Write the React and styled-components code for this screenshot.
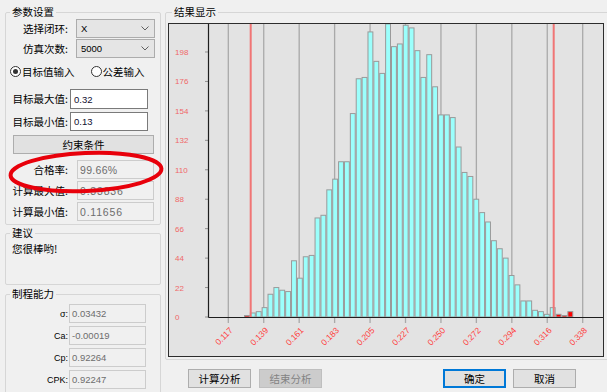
import React from 'react';
import styled, { createGlobalStyle } from 'styled-components';

const GlobalStyle = createGlobalStyle`
  html, body {
    margin: 0;
    padding: 0;
    background: #f0f0f0;
  }
  body {
    font-family: "Noto Sans CJK SC", "Liberation Sans", sans-serif;
  }
`;

const Window = styled.div`
  position: relative;
  width: 607px;
  height: 392px;
  overflow: hidden;
  background: #f0f0f0;
  display: flex;
  font-size: 10.5px;
  color: #000;
`;

const LeftColumn = styled.div`
  width: 156px;
  margin-left: 5px;
  padding-top: 5px;
  display: flex;
  flex-direction: column;
`;

const RightColumn = styled.div`
  width: 442px;
  margin-left: 4px;
  padding-top: 5px;
  display: flex;
  flex-direction: column;
`;

const Group = styled.fieldset`
  margin: ${p => p.$mt || 0}px 0 0 0;
  padding: 0 ${p => p.$pr || 0}px 0 ${p => p.$pl || 0}px;
  border: 1px solid #d6d6d6;
  border-radius: 2px;
  min-width: 0;
  height: ${p => p.$h}px;
  width: ${p => p.$w ? `${p.$w}px` : 'auto'};
  box-sizing: border-box;
  display: flex;
  flex-direction: column;
  flex-shrink: 0;
`;

const Legend = styled.legend`
  margin-left: 4px;
  padding: 0 2px;
  font-size: 10.5px;
  line-height: 14px;
  height: 14px;
`;

const FieldRow = styled.div`
  display: grid;
  grid-template-columns: 62px ${p => p.$w}px;
  column-gap: ${p => p.$gap}px;
  align-items: center;
  height: ${p => p.$h || 19}px;
  margin-top: ${p => p.$mt || 0}px;
`;

const Label = styled.span`
  text-align: right;
  white-space: nowrap;
  font-size: ${p => p.$small ? '9px' : '10.5px'};
  font-family: ${p => p.$small ? '"Liberation Sans", sans-serif' : 'inherit'};
  line-height: 14px;
`;

const ComboBox = styled.div`
  height: 100%;
  box-sizing: border-box;
  border: 1px solid #acacac;
  background: #e5e5e5;
  display: flex;
  align-items: center;
  justify-content: space-between;
  padding: 0 5px 0 4px;
  font-family: "Liberation Sans", sans-serif;
  font-size: 9.5px;
`;

const TextBox = styled.div`
  height: 100%;
  box-sizing: border-box;
  border: 1px solid ${p => p.$readOnly ? '#cccccc' : '#7a7a7a'};
  background: ${p => p.$readOnly ? '#f0f0f0' : '#fff'};
  color: ${p => p.$readOnly ? '#6d6d6d' : '#101030'};
  display: flex;
  align-items: center;
  padding-left: ${p => p.$readOnly ? 2 : 3}px;
  font-family: "Liberation Sans", sans-serif;
  font-size: ${p => p.$size || 9.5}px;
  letter-spacing: ${p => p.$spacing || 0}px;
`;

const RadioRow = styled.div`
  display: flex;
  align-items: center;
  height: 13px;
  margin-top: 7px;
  padding-left: 4px;
  gap: 16px;
`;

const RadioOption = styled.label`
  display: flex;
  align-items: center;
  gap: 1px;
  line-height: 13px;
  white-space: nowrap;
`;

const RadioDot = styled.span`
  width: 11px;
  height: 11px;
  box-sizing: border-box;
  border-radius: 50%;
  border: 1px solid #333;
  background: #fff;
  display: inline-flex;
  align-items: center;
  justify-content: center;
  &::after {
    content: '';
    width: 5px;
    height: 5px;
    border-radius: 50%;
    background: ${p => p.$checked ? '#333' : 'transparent'};
  }
`;

const WideButton = styled.div`
  margin: 4px 0 0 7px;
  width: 141px;
  height: 19px;
  box-sizing: border-box;
  border: 1px solid #adadad;
  background: #e1e1e1;
  display: flex;
  align-items: center;
  justify-content: center;
  line-height: 14px;
`;

const Advice = styled.div`
  margin-top: 2px;
  padding-left: 6px;
  line-height: 14px;
`;

const ChartFrame = styled.div`
  margin-top: 4px;
  width: 436px;
  height: 334px;
  box-sizing: border-box;
  border: 1px solid #2d2d2d;
  background: #e3e3e3;
  svg {
    display: block;
  }
`;

const ButtonBar = styled.div`
  display: flex;
  align-items: center;
  margin-top: 9px;
  padding: 0 31px 0 23px;
`;

const ButtonGroup = styled.div`
  display: flex;
  gap: ${p => p.$gap}px;
  margin-left: ${p => p.$push ? 'auto' : '0'};
`;

const Button = styled.div`
  width: 63px;
  height: 19px;
  box-sizing: border-box;
  border: 1px solid ${p => p.$focused ? '#0078d7' : p.$disabled ? '#bfbfbf' : '#adadad'};
  box-shadow: ${p => p.$focused ? 'inset 0 0 0 1px #0078d7' : 'none'};
  background: ${p => p.$disabled ? '#cccccc' : '#e1e1e1'};
  color: ${p => p.$disabled ? '#838383' : '#000'};
  display: flex;
  align-items: center;
  justify-content: center;
  line-height: 14px;
`;

const HighlightMark = styled.svg`
  position: absolute;
  left: 4px;
  top: 147px;
  overflow: visible;
`;

const Chevron = () => (
  <svg width="8" height="5" viewBox="0 0 8 5">
    <polyline points="0.5,0.5 4,4 7.5,0.5" fill="none" stroke="#606060" strokeWidth="1" />
  </svg>
);

// histogram data read off the original chart
const counts = [
  1, 3, 4, 7, 17, 22, 20, 19, 42, 29, 45, 46, 74, 76, 95, 103, 116, 116, 152,
  178, 179, 213, 191, 182, 219, 202, 204, 218, 216, 199, 179, 196, 172, 151, 151, 149, 127, 108,
  105, 88, 78, 71, 57, 51, 44, 31, 24, 12, 12, 5, 4, 2, 7, 2, 1, 4,
];
const redBars = [0, 53, 54, 55];
const xLabels = ['0.117', '0.139', '0.161', '0.183', '0.205', '0.227', '0.250', '0.272', '0.294', '0.316', '0.338'];
const yLabels = [0, 22, 44, 66, 88, 110, 132, 154, 176, 198];

const OX = 169;
const OY = 24;
const TICK0 = 228.3;
const TICK_STEP = 35.44;
const BASE = 317;
const PER = 1.3384;
const BAR0 = 244;
const BAR_W = 5.88;
const LSL = 250.7;
const USL = 553.7;

function Histogram() {
  const plotLeft = 208 - OX + 0.5;
  const base = BASE - OY;
  return (
    <svg width="434" height="332" viewBox="0 0 434 332" fontFamily='"Liberation Sans", sans-serif'>
      {xLabels.map((l, i) => {
        const x = TICK0 + i * TICK_STEP - OX;
        return (
          <g key={l}>
            <line x1={x} y1={0} x2={x} y2={base + 6} stroke="#a9a9a9" strokeWidth="1.3" />
            <text
              transform={`translate(${x + 5}, ${331 - OY}) rotate(-45)`}
              textAnchor="end"
              fontSize="8.5"
              fill="#ff3b3b"
            >
              {l}
            </text>
          </g>
        );
      })}
      {yLabels.map(v => {
        const y = base - v * PER;
        return (
          <g key={v}>
            <line x1={205 - OX} y1={y} x2={plotLeft} y2={y} stroke="#909090" strokeWidth="1" />
            <text x={175 - OX} y={y + 3} fontSize="8" fill="#f06868">{v}</text>
          </g>
        );
      })}
      {counts.map((c, i) => {
        const x = BAR0 + i * BAR_W - OX;
        const h = Math.max(c * PER, 1.5);
        const red = redBars.includes(i);
        return (
          <g key={i}>
            <rect
              x={x + 0.5}
              y={base - h}
              width={BAR_W - 1}
              height={h}
              fill={red ? '#ff0000' : '#9bfffc'}
              stroke="#9a9a9a"
              strokeWidth="1"
            />
            {i === 52 && (
              <rect x={USL + 1 - OX} y={base - h + 0.5} width={x + BAR_W - 1 - (USL + 1 - OX)} height={h - 0.5} fill="#ff0000" />
            )}
          </g>
        );
      })}
      <line x1={LSL - OX} y1={0} x2={LSL - OX} y2={base} stroke="#f07575" strokeWidth="2" />
      <line x1={USL - OX} y1={0} x2={USL - OX} y2={base} stroke="#f07575" strokeWidth="2" />
      <line x1={plotLeft} y1={0} x2={plotLeft} y2={base + 0.5} stroke="#1e1e1e" strokeWidth="1.2" />
      <line x1={plotLeft} y1={base + 0.5} x2={434} y2={base + 0.5} stroke="#1e1e1e" strokeWidth="1.2" />
    </svg>
  );
}

export default function App() {
  return (
    <Window>
      <GlobalStyle />
      <LeftColumn>
        <Group $h={220} $pl={0}>
          <Legend>参数设置</Legend>
          <FieldRow $w={79} $gap={8}>
            <Label>选择闭环:</Label>
            <ComboBox>X<Chevron /></ComboBox>
          </FieldRow>
          <FieldRow $w={79} $gap={8} $mt={1}>
            <Label>仿真次数:</Label>
            <ComboBox>5000<Chevron /></ComboBox>
          </FieldRow>
          <RadioRow>
            <RadioOption><RadioDot $checked />目标值输入</RadioOption>
            <RadioOption><RadioDot />公差输入</RadioOption>
          </RadioRow>
          <FieldRow $w={78} $gap={2} $h={20} $mt={11}>
            <Label>目标最大值:</Label>
            <TextBox>0.32</TextBox>
          </FieldRow>
          <FieldRow $w={78} $gap={2} $mt={3}>
            <Label>目标最小值:</Label>
            <TextBox>0.13</TextBox>
          </FieldRow>
          <WideButton>约束条件</WideButton>
          <FieldRow $w={77} $gap={9} $mt={6}>
            <Label>合格率:</Label>
            <TextBox $readOnly $size={10.5} $spacing={0.3}>99.66%</TextBox>
          </FieldRow>
          <FieldRow $w={77} $gap={9} $mt={2}>
            <Label>计算最大值:</Label>
            <TextBox $readOnly $size={10.5} $spacing={0.8}>0.33836</TextBox>
          </FieldRow>
          <FieldRow $w={77} $gap={9} $mt={2}>
            <Label>计算最小值:</Label>
            <TextBox $readOnly $size={10.5} $spacing={0.8}>0.11656</TextBox>
          </FieldRow>
        </Group>
        <Group $h={59} $mt={1}>
          <Legend>建议</Legend>
          <Advice>您很棒哟!</Advice>
        </Group>
        <Group $h={120} $mt={2}>
          <Legend>制程能力</Legend>
          <FieldRow $w={77} $gap={1} $mt={3}>
            <Label $small>σ:</Label>
            <TextBox $readOnly>0.03432</TextBox>
          </FieldRow>
          <FieldRow $w={77} $gap={1} $mt={3}>
            <Label $small>Ca:</Label>
            <TextBox $readOnly>-0.00019</TextBox>
          </FieldRow>
          <FieldRow $w={77} $gap={1} $mt={3}>
            <Label $small>Cp:</Label>
            <TextBox $readOnly>0.92264</TextBox>
          </FieldRow>
          <FieldRow $w={77} $gap={1} $mt={3}>
            <Label $small>CPK:</Label>
            <TextBox $readOnly>0.92247</TextBox>
          </FieldRow>
        </Group>
      </LeftColumn>
      <RightColumn>
        <Group $h={355} $w={446} $pl={2}>
          <Legend>结果显示</Legend>
          <ChartFrame>
            <Histogram />
          </ChartFrame>
        </Group>
        <ButtonBar>
          <ButtonGroup $gap={8}>
            <Button>计算分析</Button>
            <Button $disabled>结束分析</Button>
          </ButtonGroup>
          <ButtonGroup $gap={7} $push>
            <Button $focused>确定</Button>
            <Button>取消</Button>
          </ButtonGroup>
        </ButtonBar>
      </RightColumn>
      <HighlightMark width="164" height="50" viewBox="0 0 164 50">
        <ellipse cx="82" cy="25" rx="75.5" ry="19" fill="none" stroke="#e8000b" strokeWidth="4" transform="rotate(-2.5 82 25)" />
      </HighlightMark>
    </Window>
  );
}
